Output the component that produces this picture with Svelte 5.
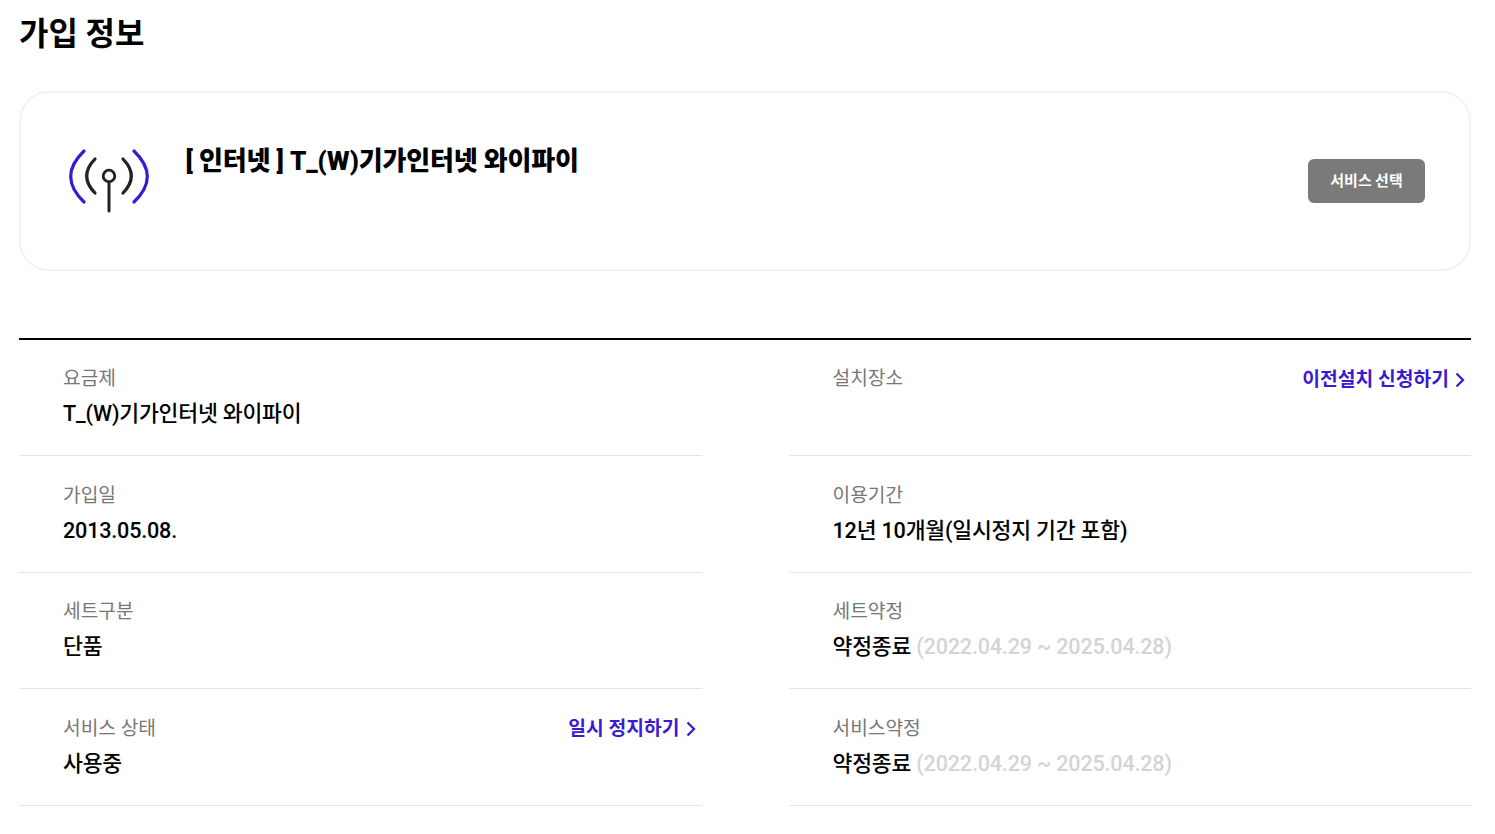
<script>
  const rows = [
    [
      { label: '요금제', value: 'T_(W)기가인터넷 와이파이' },
      { label: '설치장소', value: '', link: '이전설치 신청하기' }
    ],
    [
      { label: '가입일', value: '2013.05.08.' },
      { label: '이용기간', value: '12년 10개월(일시정지 기간 포함)' }
    ],
    [
      { label: '세트구분', value: '단품' },
      { label: '세트약정', value: '약정종료', period: '(2022.04.29 ~ 2025.04.28)' }
    ],
    [
      { label: '서비스 상태', value: '사용중', link: '일시 정지하기' },
      { label: '서비스약정', value: '약정종료', period: '(2022.04.29 ~ 2025.04.28)' }
    ]
  ];
  const items = rows.flat();
</script>

<div class="page">
  <h2 class="title">가입 정보</h2>

  <section class="card">
    <svg class="icon" width="80" height="64" viewBox="0 0 80 64" fill="none" stroke-linecap="round" aria-hidden="true">
      <path d="M15 2Q-11.6 27.5 15 53M65 2Q91.6 27.5 65 53" stroke="#3a1bd0" stroke-width="3.2" />
      <path d="M26 10Q9.4 27 26 44M54 10Q70.6 27 54 44" stroke="#222" stroke-width="3.2" />
      <circle cx="40" cy="27" r="5.8" stroke="#222" stroke-width="2.8" />
      <path d="M40 33V62" stroke="#222" stroke-width="3" />
    </svg>
    <div class="name">[ 인터넷 ] T_(W)기가인터넷 와이파이</div>
    <button class="select"><span>서비스 선택</span></button>
  </section>

  <div class="grid">
    {#each items as item}
      <div class="cell">
        <div class="label">{item.label}</div>
        <div class="value">{item.value}{#if item.period}&nbsp;<span class="period">{item.period}</span>{/if}</div>
        {#if item.link}
          <a class="link" href="#top">
            {item.link}
            <svg width="10" height="16" viewBox="0 0 10 16" fill="none" aria-hidden="true"><path d="M1.5 1.5L8 8L1.5 14.5" stroke="#3a1bd0" stroke-width="2.3" /></svg>
          </a>
        {/if}
      </div>
    {/each}
  </div>
</div>

<style>
  :global(body) {
    margin: 0;
    background: #fff;
    font-family: Roboto, "Noto Sans CJK KR", sans-serif;
    color: #000;
  }
  .page {
    padding: 8px 24px 0 19px;
  }
  .title {
    margin: 0;
    font-size: 32px;
    line-height: 46px;
    font-weight: 700;
    letter-spacing: 0.1px;
    font-family: "Noto Sans CJK KR", sans-serif;
  }
  .card {
    margin-top: 37px;
    height: 180px;
    box-sizing: border-box;
    border: 2px solid #f2f2f2;
    border-radius: 30px;
    display: flex;
    align-items: flex-start;
    padding: 0 44px 0 48px;
  }
  .icon {
    margin-top: 56px;
    flex: none;
  }
  .name {
    margin: 49px 0 0 36.5px;
    flex: 1;
    font-size: 26px;
    line-height: 38px;
    font-weight: 900;
    letter-spacing: -0.17px;
  }
  .select {
    margin-top: 66px;
    width: 117px;
    height: 44px;
    padding: 0 0 3px;
    border: 0;
    border-radius: 6px;
    background: #7a7a7a;
    color: #fff;
    font: 700 15px "Noto Sans CJK KR", sans-serif;
  }
  .grid {
    margin-top: 67px;
    border-top: 2px solid #000;
    display: grid;
    grid-template-columns: 682.5px 682.5px;
    column-gap: 87px;
  }
  .cell {
    position: relative;
    height: 116.4px;
    box-sizing: border-box;
    border-bottom: 1px solid #e4e4e4;
    padding: 25.4px 44px 0;
  }
  .label {
    font-size: 19.2px;
    line-height: 28px;
    color: #777;
  }
  .value {
    margin-top: 5px;
    font-size: 21.6px;
    line-height: 32px;
    font-weight: 500;
    letter-spacing: -0.2px;
    min-height: 32px;
  }
  .period {
    color: #d4d4d4;
  }
  .link {
    position: absolute;
    top: 26px;
    right: 6px;
    display: flex;
    align-items: center;
    gap: 6px;
    font-size: 19.3px;
    line-height: 28px;
    font-weight: 700;
    color: #3a1bd0;
    text-decoration: none;
  }
</style>
